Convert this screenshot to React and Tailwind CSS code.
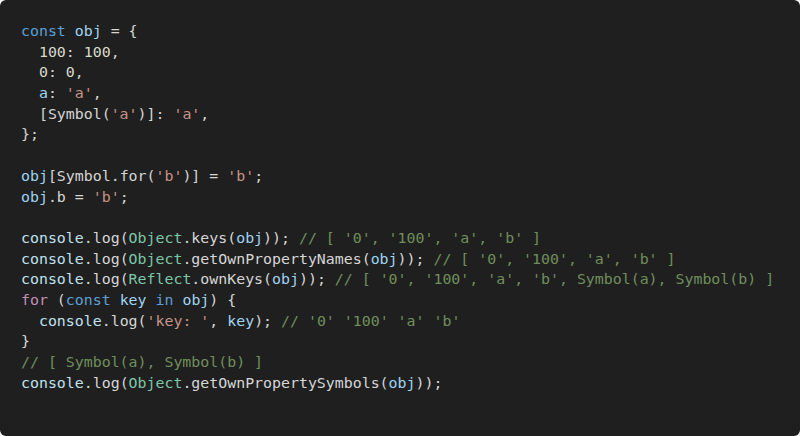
const C = {
  kw: "text-[#5d9fd6]",
  v: "text-[#9fd4f2]",
  p: "text-[#d6d6d6]",
  s: "text-[#c69488]",
  n: "text-[#dadace]",
  c: "text-[#6f8f5c]",
  t: "text-[#7cc7a8]",
  k: "text-[#c48fb6]",
  con: "text-[#c0e2f0]",
};

// each line is a list of [colour, text] pairs
const lines = [
  [[C.kw, "const "], [C.v, "obj"], [C.p, " = {"]],
  [[C.p, "  "], [C.n, "100"], [C.p, ": "], [C.n, "100"], [C.p, ","]],
  [[C.p, "  "], [C.n, "0"], [C.p, ": "], [C.n, "0"], [C.p, ","]],
  [[C.p, "  "], [C.v, "a"], [C.p, ": "], [C.s, "'a'"], [C.p, ","]],
  [[C.p, "  [Symbol("], [C.s, "'a'"], [C.p, ")]: "], [C.s, "'a'"], [C.p, ","]],
  [[C.p, "};"]],
  [],
  [[C.v, "obj"], [C.p, "[Symbol.for("], [C.s, "'b'"], [C.p, ")] = "], [C.s, "'b'"], [C.p, ";"]],
  [[C.v, "obj"], [C.p, ".b = "], [C.s, "'b'"], [C.p, ";"]],
  [],
  [[C.con, "console"], [C.p, ".log("], [C.t, "Object"], [C.p, ".keys("], [C.v, "obj"], [C.p, ")); "], [C.c, "// [ '0', '100', 'a', 'b' ]"]],
  [[C.con, "console"], [C.p, ".log("], [C.t, "Object"], [C.p, ".getOwnPropertyNames("], [C.v, "obj"], [C.p, ")); "], [C.c, "// [ '0', '100', 'a', 'b' ]"]],
  [[C.con, "console"], [C.p, ".log("], [C.t, "Reflect"], [C.p, ".ownKeys("], [C.v, "obj"], [C.p, ")); "], [C.c, "// [ '0', '100', 'a', 'b', Symbol(a), Symbol(b) ]"]],
  [[C.k, "for"], [C.p, " ("], [C.kw, "const "], [C.v, "key"], [C.kw, " in "], [C.v, "obj"], [C.p, ") {"]],
  [[C.p, "  "], [C.con, "console"], [C.p, ".log("], [C.s, "'key: '"], [C.p, ", "], [C.v, "key"], [C.p, "); "], [C.c, "// '0' '100' 'a' 'b'"]],
  [[C.p, "}"]],
  [[C.c, "// [ Symbol(a), Symbol(b) ]"]],
  [[C.con, "console"], [C.p, ".log("], [C.t, "Object"], [C.p, ".getOwnPropertySymbols("], [C.v, "obj"], [C.p, "));"]],
];

export default function App() {
  return (
    <div className="w-[800px] h-[436px] bg-white">
      <div className="w-full h-full rounded-[6px] bg-[#1f1f1f] pl-[21px] pt-[21px]">
        <pre className="font-['DejaVu_Sans_Mono',monospace] text-[14.9px] leading-[20.7px] whitespace-pre">
          {lines.map((line, i) => (
            <div key={i} className="h-[20.7px]">
              {line.map(([cls, txt], j) => (
                <span key={j} className={cls}>
                  {txt}
                </span>
              ))}
            </div>
          ))}
        </pre>
      </div>
    </div>
  );
}
